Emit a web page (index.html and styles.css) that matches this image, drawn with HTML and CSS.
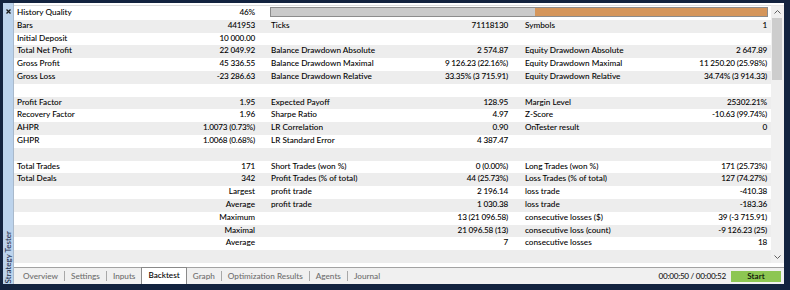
FILE: index.html
```html
<!DOCTYPE html>
<html>
<head>
<meta charset="utf-8">
<link rel="stylesheet" href="styles.css">
</head>
<body>
<div class="window">
  <aside class="sidebar">
    <span class="close"><svg width="5" height="5" viewBox="0 0 5 5"><path d="M0.5 0.5L4.5 4.5M4.5 0.5L0.5 4.5" stroke="#1a1a1a" stroke-width="1.3"/></svg></span>
    <span class="side-title">Strategy Tester</span>
  </aside>
  <main class="panel">
    <section class="report">
      <div class="table">
        <div class="row">
          <div class="cell"><span>History Quality</span><span class="v">46%</span></div>
          <div class="qbar"><div class="qfill" style="width:46.8%"></div></div>
        </div>
        <div class="row">
          <div class="cell"><span>Bars</span><span class="v">441953</span></div>
          <div class="cell"><span>Ticks</span><span class="v">71118130</span></div>
          <div class="cell"><span>Symbols</span><span class="v">1</span></div>
        </div>
        <div class="row">
          <div class="cell"><span>Initial Deposit</span><span class="v">10 000.00</span></div>
          <div class="cell"></div>
          <div class="cell"></div>
        </div>
        <div class="row">
          <div class="cell"><span>Total Net Profit</span><span class="v">22 049.92</span></div>
          <div class="cell"><span>Balance Drawdown Absolute</span><span class="v">2 574.87</span></div>
          <div class="cell"><span>Equity Drawdown Absolute</span><span class="v">2 647.89</span></div>
        </div>
        <div class="row">
          <div class="cell"><span>Gross Profit</span><span class="v">45 336.55</span></div>
          <div class="cell"><span>Balance Drawdown Maximal</span><span class="v">9 126.23 (22.16%)</span></div>
          <div class="cell"><span>Equity Drawdown Maximal</span><span class="v">11 250.20 (25.98%)</span></div>
        </div>
        <div class="row">
          <div class="cell"><span>Gross Loss</span><span class="v">-23 286.63</span></div>
          <div class="cell"><span>Balance Drawdown Relative</span><span class="v">33.35% (3 715.91)</span></div>
          <div class="cell"><span>Equity Drawdown Relative</span><span class="v">34.74% (3 914.33)</span></div>
        </div>
        <div class="row"></div>
        <div class="row">
          <div class="cell"><span>Profit Factor</span><span class="v">1.95</span></div>
          <div class="cell"><span>Expected Payoff</span><span class="v">128.95</span></div>
          <div class="cell"><span>Margin Level</span><span class="v">25302.21%</span></div>
        </div>
        <div class="row">
          <div class="cell"><span>Recovery Factor</span><span class="v">1.96</span></div>
          <div class="cell"><span>Sharpe Ratio</span><span class="v">4.97</span></div>
          <div class="cell"><span>Z-Score</span><span class="v">-10.63 (99.74%)</span></div>
        </div>
        <div class="row">
          <div class="cell"><span>AHPR</span><span class="v">1.0073 (0.73%)</span></div>
          <div class="cell"><span>LR Correlation</span><span class="v">0.90</span></div>
          <div class="cell"><span>OnTester result</span><span class="v">0</span></div>
        </div>
        <div class="row">
          <div class="cell"><span>GHPR</span><span class="v">1.0068 (0.68%)</span></div>
          <div class="cell"><span>LR Standard Error</span><span class="v">4 387.47</span></div>
          <div class="cell"></div>
        </div>
        <div class="row"></div>
        <div class="row">
          <div class="cell"><span>Total Trades</span><span class="v">171</span></div>
          <div class="cell"><span>Short Trades (won %)</span><span class="v">0 (0.00%)</span></div>
          <div class="cell"><span>Long Trades (won %)</span><span class="v">171 (25.73%)</span></div>
        </div>
        <div class="row">
          <div class="cell"><span>Total Deals</span><span class="v">342</span></div>
          <div class="cell"><span>Profit Trades (% of total)</span><span class="v">44 (25.73%)</span></div>
          <div class="cell"><span>Loss Trades (% of total)</span><span class="v">127 (74.27%)</span></div>
        </div>
        <div class="row">
          <div class="cell"><span></span><span>Largest</span></div>
          <div class="cell"><span>profit trade</span><span class="v">2 196.14</span></div>
          <div class="cell"><span>loss trade</span><span class="v">-410.38</span></div>
        </div>
        <div class="row">
          <div class="cell"><span></span><span>Average</span></div>
          <div class="cell"><span>profit trade</span><span class="v">1 030.38</span></div>
          <div class="cell"><span>loss trade</span><span class="v">-183.36</span></div>
        </div>
        <div class="row">
          <div class="cell"><span></span><span>Maximum</span></div>
          <div class="cell"><span></span><span class="v">13 (21 096.58)</span></div>
          <div class="cell"><span>consecutive losses ($)</span><span class="v">39 (-3 715.91)</span></div>
        </div>
        <div class="row">
          <div class="cell"><span></span><span>Maximal</span></div>
          <div class="cell"><span></span><span class="v">21 096.58 (13)</span></div>
          <div class="cell"><span>consecutive loss (count)</span><span class="v">-9 126.23 (25)</span></div>
        </div>
        <div class="row">
          <div class="cell"><span></span><span>Average</span></div>
          <div class="cell"><span></span><span class="v">7</span></div>
          <div class="cell"><span>consecutive losses</span><span class="v">18</span></div>
        </div>
        <div class="row"></div>
      </div>
      <div class="scrollbar">
        <div class="sb-btn"><svg width="7" height="4" viewBox="0 0 7 4"><path d="M0.5 3.5L3.5 0.5L6.5 3.5" fill="none" stroke="#606060" stroke-width="1"/></svg></div>
        <div class="sb-track"><div class="sb-thumb"></div></div>
        <div class="sb-btn"><svg width="7" height="4" viewBox="0 0 7 4"><path d="M0.5 0.5L3.5 3.5L6.5 0.5" fill="none" stroke="#606060" stroke-width="1"/></svg></div>
      </div>
    </section>
    <nav class="tabs">
      <span class="tab">Overview</span><span class="sep"></span>
      <span class="tab">Settings</span><span class="sep"></span>
      <span class="tab">Inputs</span>
      <span class="tab active">Backtest</span>
      <span class="tab">Graph</span><span class="sep"></span>
      <span class="tab">Optimization Results</span><span class="sep"></span>
      <span class="tab">Agents</span><span class="sep"></span>
      <span class="tab">Journal</span>
      <span class="timer">00:00:50 / 00:00:52</span>
      <span class="start">Start</span>
    </nav>
  </main>
</div>
</body>
</html>
```

FILE: styles.css
```css
* { box-sizing: border-box; }
html, body { margin: 0; }
body {
  width: 790px;
  height: 290px;
  overflow: hidden;
  background: #13233f;
  padding: 3px 6px 6px 3px;
  font-family: Lato, "Noto Sans", sans-serif;
  font-size: 8.2px;
  font-weight: 500;
  color: #000;
}
.window {
  display: flex;
  width: 781px;
  height: 281px;
}
.sidebar {
  width: 10px;
  background: #bcd3ec;
  display: flex;
  flex-direction: column;
  justify-content: space-between;
  align-items: center;
  padding: 4px 0 1px;
}
.close {
  display: flex;
  width: 10px;
  height: 8px;
  align-items: center;
  justify-content: center;
}
.close svg { display: block; }
.side-title {
  writing-mode: vertical-rl;
  transform: rotate(180deg);
  font-size: 8px;
  line-height: 10px;
  color: #1c2d48;
  white-space: nowrap;
}
.panel {
  flex: 1;
  border-left: 1px solid #a9b9cb;
  background: #fff;
  display: flex;
  flex-direction: column;
}
.report {
  display: flex;
  height: 260px;
  padding-top: 2px;
}
.table {
  width: 757px;
  border-top: 1px solid #dcdcdc;
  padding-top: 1px;
}
.row {
  display: grid;
  grid-template-columns: 254px 254px 249px;
  height: 12.8px;
  line-height: 11.6px;
}
.row:nth-child(even) { background: #ededed; }
.cell {
  display: flex;
  justify-content: space-between;
  white-space: nowrap;
  padding: 0 13px 0 3px;
}
.cell:nth-child(2) { padding-right: 14px; }
.cell:nth-child(3) { padding-right: 4px; }
.v { letter-spacing: -0.2px; }
.qbar {
  grid-column: 2 / 4;
  margin: 0 3px 0 2px;
  height: 10px;
  border: 1px solid #8c8c8c;
  background: #cacaca;
  display: flex;
  justify-content: flex-end;
}
.qfill {
  height: 100%;
  background: #d5965b;
}
.scrollbar {
  width: 13px;
  background: #f0f0f0;
  display: flex;
  flex-direction: column;
  border-top: 1px solid #e6e6e6;
}
.sb-btn {
  height: 12px;
  display: flex;
  align-items: center;
  justify-content: center;
}
.sb-btn svg { display: block; }
.sb-track {
  flex: 1;
  padding: 0 2px 0 1px;
}
.sb-thumb {
  height: 62px;
  background: #cdcdcd;
}
.tabs {
  margin-top: 4px;
  height: 17px;
  border-top: 1px solid #a3a3a3;
  background: #f0f0f0;
  display: flex;
  align-items: center;
  padding-left: 3px;
  padding-right: 3px;
}
.tab {
  padding: 0 6px;
  color: #6e6e6e;
  line-height: 15px;
  white-space: nowrap;
}
.tab.active {
  align-self: stretch;
  margin-top: -1px;
  background: #fff;
  color: #000;
  border: 1px solid #8a8a8a;
  border-bottom: none;
  padding: 0 6px;
  line-height: 15px;
}
.sep {
  width: 1px;
  height: 10px;
  background: #a8a8a8;
}
.timer {
  margin-left: auto;
  white-space: nowrap;
  letter-spacing: -0.3px;
  color: #1a1a1a;
}
.start {
  margin-left: 5px;
  width: 50px;
  height: 11px;
  line-height: 11px;
  text-align: center;
  background: #8dc652;
  color: #000;
}
```
